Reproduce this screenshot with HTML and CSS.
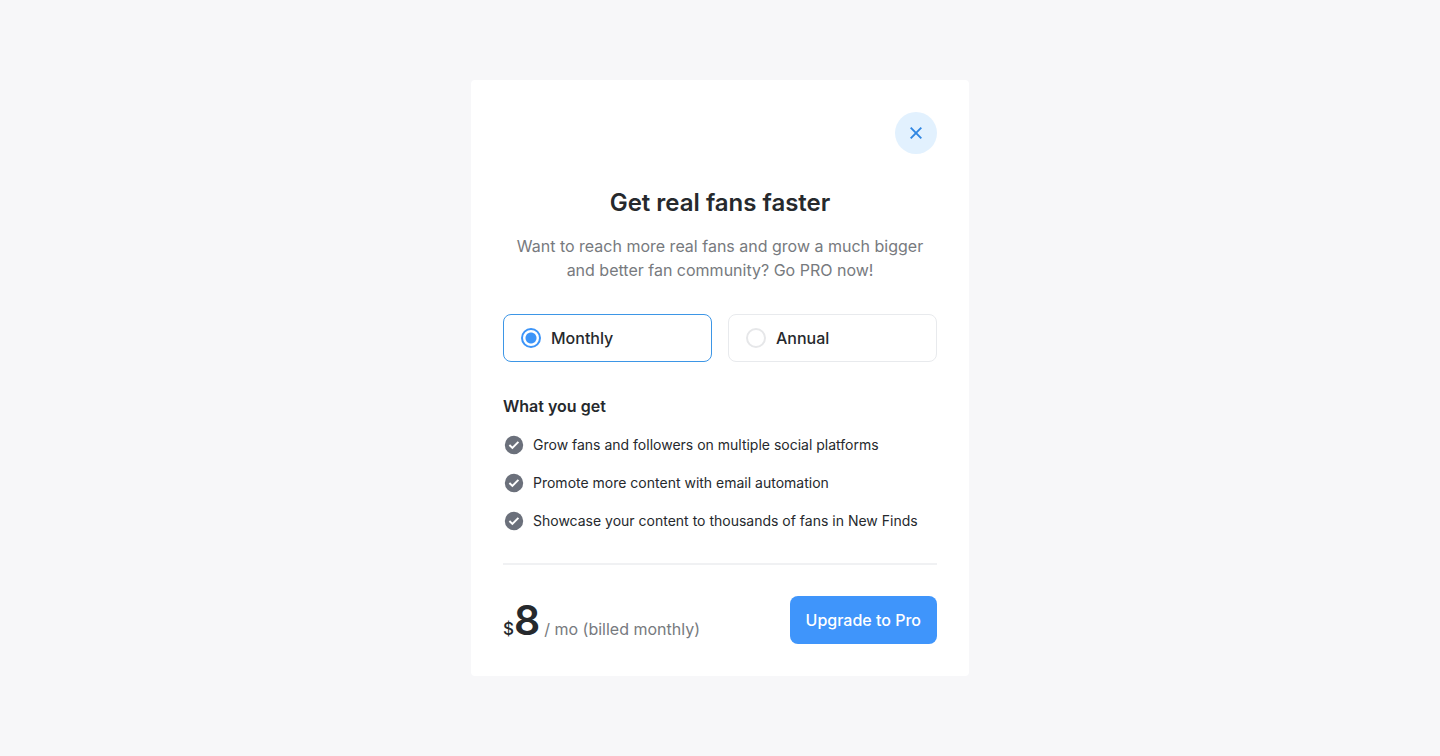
FILE: index.html
```html
<!DOCTYPE html>
<html lang="en">
<head>
<meta charset="utf-8">
<meta name="viewport" content="width=device-width, initial-scale=1">
<title>Get real fans faster</title>
<link rel="stylesheet" href="styles.css">
</head>
<body>
<main class="card">
  <button class="close" type="button" aria-label="Close">
    <svg width="14" height="14" viewBox="0 0 14 14" fill="none" stroke="currentColor" stroke-width="1.9"><path d="M1.7 1.7l10.6 10.6M12.3 1.7L1.7 12.3"/></svg>
  </button>
  <h1 class="title">Get real fans faster</h1>
  <p class="lead">Want to reach more real fans and grow a much bigger and better fan community? Go PRO now!</p>
  <div class="plans" role="radiogroup" aria-label="Billing period">
    <label class="plan"><input class="radio" type="radio" name="plan" checked>Monthly</label>
    <label class="plan"><input class="radio" type="radio" name="plan">Annual</label>
  </div>
  <h2 class="subtitle">What you get</h2>
  <ul class="features">
    <li class="feature"><svg class="check" viewBox="0 0 22 22"><circle cx="11" cy="11" r="9.2" fill="currentColor"/><path d="M6.4 11l3 2.9 6-6" fill="none" stroke="#fff" stroke-width="2"/></svg>Grow fans and followers on multiple social platforms</li>
    <li class="feature"><svg class="check" viewBox="0 0 22 22"><circle cx="11" cy="11" r="9.2" fill="currentColor"/><path d="M6.4 11l3 2.9 6-6" fill="none" stroke="#fff" stroke-width="2"/></svg>Promote more content with email automation</li>
    <li class="feature"><svg class="check" viewBox="0 0 22 22"><circle cx="11" cy="11" r="9.2" fill="currentColor"/><path d="M6.4 11l3 2.9 6-6" fill="none" stroke="#fff" stroke-width="2"/></svg>Showcase your content to thousands of fans in New Finds</li>
  </ul>
  <footer class="footer">
    <p class="price"><span class="currency">$</span><strong class="amount">8</strong><span class="period">/ mo (billed monthly)</span></p>
    <button class="upgrade" type="button">Upgrade to Pro</button>
  </footer>
</main>
</body>
</html>
```
FILE: styles.css
```css
* { box-sizing: border-box; margin: 0; }
body {
  min-height: 100vh;
  display: grid;
  place-items: center;
  background: #f7f7f9;
  color: #26292d;
  font: 16px/24px Inter, sans-serif;
}
.card {
  display: flex;
  flex-direction: column;
  width: 100%;
  max-width: 498px;
  padding: 32px;
  border-radius: 4px;
  background: #fff;
}
.close {
  display: grid;
  place-items: center;
  align-self: flex-end;
  width: 42px;
  height: 42px;
  padding: 0;
  border: 0;
  border-radius: 50%;
  background: #e2f1fe;
  color: #2f86e2;
}
.title {
  margin-top: 32px;
  font-size: 24px;
  line-height: 34px;
  font-weight: 600;
  text-align: center;
}
.lead {
  margin-top: 14px;
  padding: 0 8px;
  color: #777a7e;
  text-align: center;
}
.plans {
  display: grid;
  grid-template-columns: 1fr 1fr;
  gap: 16px;
  margin-top: 32px;
}
.plan {
  display: flex;
  align-items: center;
  gap: 10px;
  height: 48px;
  padding: 0 17px;
  border: 1px solid #e8eaed;
  border-radius: 8px;
  font-weight: 500;
}
.plan:has(:checked) { border-color: #3d96e6; }
.radio {
  appearance: none;
  width: 20px;
  height: 20px;
  margin: 0;
  border: 2px solid #e6e7e9;
  border-radius: 50%;
  background: #fff;
}
.radio:checked {
  border-color: #3c94f8;
  background: radial-gradient(circle, #3c94f8 5px, #fff 6px);
}
.subtitle {
  margin-top: 32px;
  font-size: 16px;
  line-height: 24px;
  font-weight: 600;
}
.features {
  display: flex;
  flex-direction: column;
  gap: 14px;
  margin-top: 15px;
  padding: 0;
  list-style: none;
}
.feature {
  display: flex;
  align-items: center;
  gap: 8px;
  font-size: 14px;
}
.check {
  flex: none;
  width: 22px;
  height: 22px;
  color: #6b707b;
}
.footer {
  display: flex;
  align-items: center;
  justify-content: space-between;
  margin-top: 30px;
  padding-top: 31px;
  border-top: 2px solid #f0f1f3;
}
.price {
  display: flex;
  align-items: baseline;
}
.currency { font-size: 17px; font-weight: 500; }
.amount { font-size: 41px; line-height: 48px; font-weight: 600; }
.period { margin-left: 4px; color: #777a7e; }
.upgrade {
  height: 48px;
  padding: 0 16px;
  border: 0;
  border-radius: 8px;
  background: #3f95fb;
  color: #fff;
  font: 500 16px/24px Inter, sans-serif;
}
```
